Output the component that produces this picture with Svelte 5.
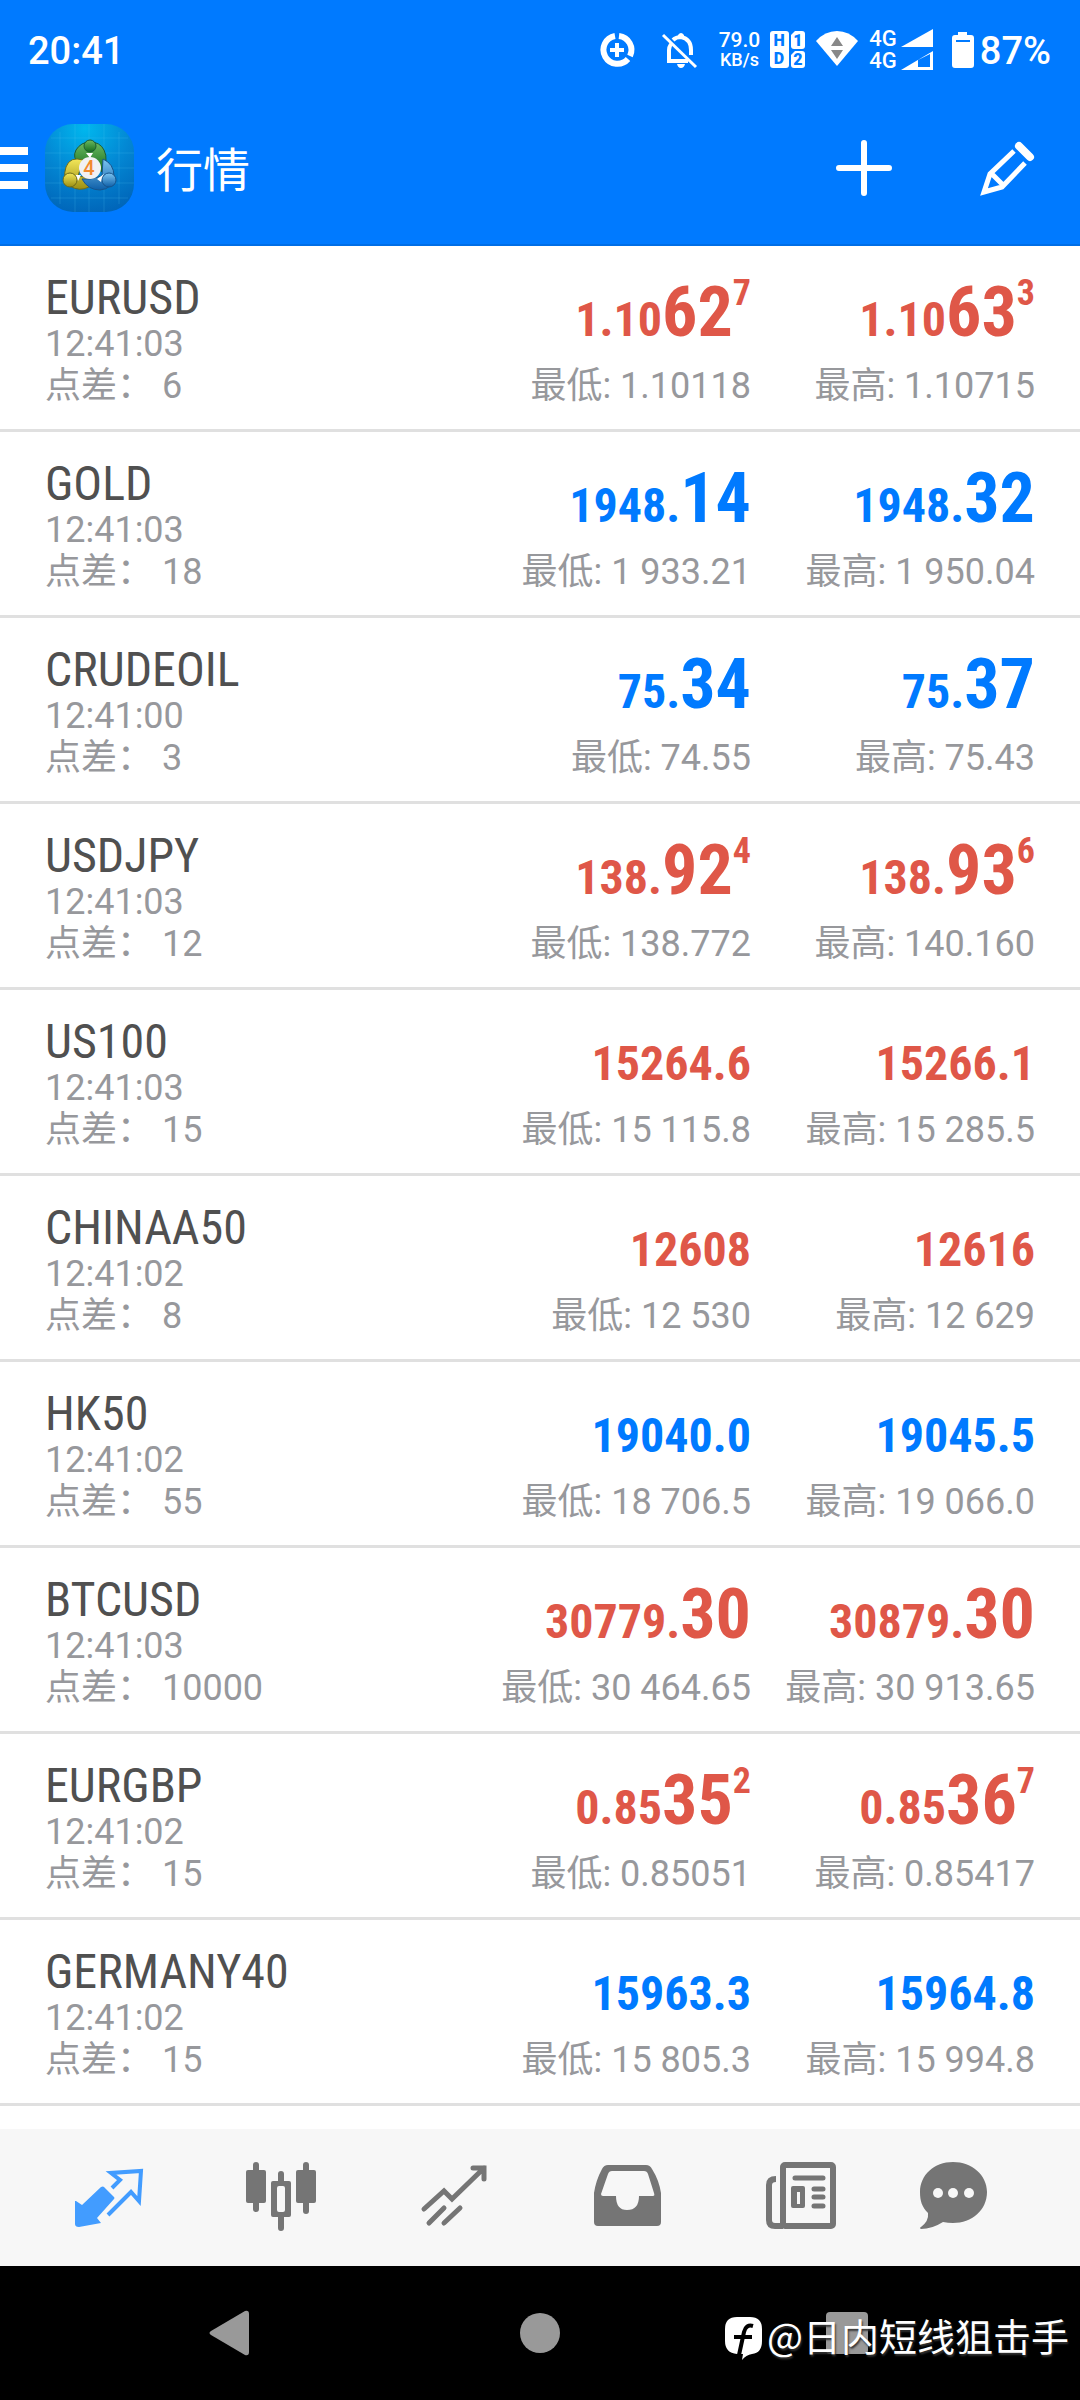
<script lang="ts">
  interface Price {
    small: string;
    big?: string;
    sup?: string;
  }

  interface Quote {
    symbol: string;
    time: string;
    spread: string;
    trend: 'up' | 'down';
    bid: Price;
    ask: Price;
    low: string;
    high: string;
  }

  const quotes: Quote[] = [
    { symbol: 'EURUSD', time: '12:41:03', spread: '6', trend: 'down', bid: { small: '1.10', big: '62', sup: '7' }, ask: { small: '1.10', big: '63', sup: '3' }, low: '1.10118', high: '1.10715' },
    { symbol: 'GOLD', time: '12:41:03', spread: '18', trend: 'up', bid: { small: '1948.', big: '14' }, ask: { small: '1948.', big: '32' }, low: '1 933.21', high: '1 950.04' },
    { symbol: 'CRUDEOIL', time: '12:41:00', spread: '3', trend: 'up', bid: { small: '75.', big: '34' }, ask: { small: '75.', big: '37' }, low: '74.55', high: '75.43' },
    { symbol: 'USDJPY', time: '12:41:03', spread: '12', trend: 'down', bid: { small: '138.', big: '92', sup: '4' }, ask: { small: '138.', big: '93', sup: '6' }, low: '138.772', high: '140.160' },
    { symbol: 'US100', time: '12:41:03', spread: '15', trend: 'down', bid: { small: '15264.6' }, ask: { small: '15266.1' }, low: '15 115.8', high: '15 285.5' },
    { symbol: 'CHINAA50', time: '12:41:02', spread: '8', trend: 'down', bid: { small: '12608' }, ask: { small: '12616' }, low: '12 530', high: '12 629' },
    { symbol: 'HK50', time: '12:41:02', spread: '55', trend: 'up', bid: { small: '19040.0' }, ask: { small: '19045.5' }, low: '18 706.5', high: '19 066.0' },
    { symbol: 'BTCUSD', time: '12:41:03', spread: '10000', trend: 'down', bid: { small: '30779.', big: '30' }, ask: { small: '30879.', big: '30' }, low: '30 464.65', high: '30 913.65' },
    { symbol: 'EURGBP', time: '12:41:02', spread: '15', trend: 'down', bid: { small: '0.85', big: '35', sup: '2' }, ask: { small: '0.85', big: '36', sup: '7' }, low: '0.85051', high: '0.85417' },
    { symbol: 'GERMANY40', time: '12:41:02', spread: '15', trend: 'up', bid: { small: '15963.3' }, ask: { small: '15964.8' }, low: '15 805.3', high: '15 994.8' },
  ];

  const tabs = ['quotes', 'chart', 'trade', 'history', 'news', 'messages'];
  let activeTab = $state('quotes');
</script>

{#snippet price(value: Price, label: string, limit: string)}
  <div class="price">
    <div class="value">
      <span class="small">{value.small}</span>{#if value.big}<span class="big">{value.big}</span>{/if}{#if value.sup}<span class="sup">{value.sup}</span>{/if}
    </div>
    <div class="limit">{label}: {limit}</div>
  </div>
{/snippet}

<div class="page">
  <header>
    <div class="status">
      <span class="clock">20:41</span>
      <div class="status-icons">
        <!-- Data saver -->
        <svg width="43" height="40" viewBox="0 0 43 40" fill="none" stroke="#fff">
          <path d="M19 6 A14 14 0 0 1 30 26" stroke-width="6" />
          <path d="M28 29 A14 14 0 1 1 15 6" stroke-width="6" />
          <path d="M17 13 V27 M10 20 H24" stroke-width="4" />
        </svg>
        <!-- Muted bell -->
        <svg width="56" height="40" viewBox="0 0 56 40" fill="none" stroke="#fff">
          <path d="M10 5 L43 37" stroke-width="3" />
          <path d="M18 14 Q16 17 16 20 V31 M14 31 H35 M20 10 Q23 7 28 7 Q38 9 38 20 V25" stroke-width="4" />
          <path d="M25 8 V5 Q28 1 31 5 V8z M24 34 H32 Q31 38 28 38 Q25 38 24 34z" fill="#fff" stroke="none" />
        </svg>
        <div class="speed"><span>79.0</span><span class="unit">KB/s</span></div>
        <!-- HD voice on both sims -->
        <svg class="hd" width="36" height="40" viewBox="0 0 36 40">
          <rect x="0" y="1" width="19" height="37" rx="3" />
          <path d="M25 1 H32 Q35 1 35 4 V16 Q35 19 32 19 H24 Q21 19 21 16 V5z" />
          <path d="M25 21 H32 Q35 21 35 24 V35 Q35 38 32 38 H24 Q21 38 21 35 V25z" />
          <text x="9" y="16">H</text>
          <text x="9" y="34">D</text>
          <text x="28" y="16">1</text>
          <text x="28" y="35">2</text>
        </svg>
        <!-- Wifi -->
        <svg width="43" height="40" viewBox="0 0 43 40">
          <path d="M0 11 Q9 1 21 1 Q33 1 42 11 L21 36z" fill="#fff" />
          <path d="M15 16 L21 7 L27 16z M15 20 H27 L21 29z" fill="#888" />
        </svg>
        <div class="mobile">
          <div class="sims"><span>4G</span><span>4G</span></div>
          <svg width="32" height="44" viewBox="0 0 32 44" fill="#fff">
            <path d="M0 19 L32 1 V19z" />
            <path d="M0 42 L32 23 V42z M17 32 V39 H29 V26z" fill-rule="evenodd" />
          </svg>
        </div>
        <div class="battery">
          <svg width="31" height="40" viewBox="0 0 31 40">
            <path d="M15 2 H24 V5 H28 Q31 5 31 8 V35 Q31 38 28 38 H12 Q9 38 9 35 V8 Q9 5 12 5 H15z" fill="#fff" />
            <rect x="13" y="10" width="14" height="2" fill="#007aff" />
          </svg>
          <span>87%</span>
        </div>
      </div>
    </div>

    <div class="toolbar">
      <button class="menu" aria-label="菜单"><i></i><i></i><i></i></button>
      <svg class="logo" width="89" height="88" viewBox="0 0 89 88">
        <defs>
          <radialGradient id="tile" cx="45%" cy="5%" r="100%">
            <stop offset="0" stop-color="#00b7ee" />
            <stop offset="0.5" stop-color="#0388d4" />
            <stop offset="1" stop-color="#0064b8" />
          </radialGradient>
          <linearGradient id="green" x2="0" y2="1">
            <stop offset="0" stop-color="#6dbb62" />
            <stop offset="1" stop-color="#146c1c" />
          </linearGradient>
          <linearGradient id="yellow" x2="0" y2="1">
            <stop offset="0" stop-color="#f3e75a" />
            <stop offset="1" stop-color="#9c8f12" />
          </linearGradient>
          <linearGradient id="blue" x2="0" y2="1">
            <stop offset="0" stop-color="#7cc6f2" />
            <stop offset="1" stop-color="#0e5fa8" />
          </linearGradient>
        </defs>
        <rect width="89" height="88" rx="28" fill="url(#tile)" />
        <path d="M15 8 V80 M30 0 V88 M44 0 V88 M59 0 V88 M74 8 V80 M6 14 H83 M0 29 H89 M0 44 H89 M0 59 H89 M6 74 H83" stroke="#5cc6f0" stroke-opacity="0.2" />
        <path d="M44 35 L34 41 Q27 33 31 26 Q36 18 45 18 Q55 18 59 26 Q64 36 57 48 L52 44z" fill="url(#green)" stroke="#1d5c33" />
        <path d="M38 36 Q25 32 21 43 Q17 55 25 62 Q34 68 44 63 L45 54 L33 52z" fill="url(#yellow)" stroke="#6d6a1a" />
        <path d="M58 35 Q69 40 69 52 Q68 65 55 66 Q43 66 37 55 L45 55 L57 52z" fill="url(#blue)" stroke="#17548c" />
        <path d="M30 51 L36 51 L33 57z M52 55 L59 50 L56 58z M41 29 H48 L45 34z" fill="#fff" />
        <circle cx="45" cy="22" r="6" fill="url(#green)" stroke="#1d5c33" />
        <circle cx="25" cy="56" r="7" fill="url(#yellow)" stroke="#6d6a1a" />
        <circle cx="64" cy="56" r="7" fill="url(#blue)" stroke="#17548c" />
        <circle cx="45" cy="44" r="11" fill="#f1f1f4" />
        <text x="44" y="51" text-anchor="middle">4</text>
      </svg>
      <h1>行情</h1>
      <button class="tool" aria-label="添加">
        <svg width="60" height="60" viewBox="0 0 60 60" stroke="#fff" stroke-width="6" stroke-linecap="round">
          <path d="M30 5 V55 M5 30 H55" />
        </svg>
      </button>
      <button class="tool" aria-label="编辑">
        <svg width="60" height="60" viewBox="0 0 60 60" fill="none" stroke="#fff" stroke-width="5">
          <path d="M36 13 L12 36 L6 54 L24 49 L47 25 M13 35 L26 48" />
          <path d="M41 8 L52 19" stroke-width="8" stroke-linecap="round" />
        </svg>
      </button>
    </div>
  </header>

  <ul class="quotes">
    {#each quotes as quote (quote.symbol)}
      <li class={quote.trend}>
        <div class="info">
          <div class="symbol">{quote.symbol}</div>
          <div class="time">{quote.time}</div>
          <div class="spread">点差： {quote.spread}</div>
        </div>
        {@render price(quote.bid, '最低', quote.low)}
        {@render price(quote.ask, '最高', quote.high)}
      </li>
    {/each}
  </ul>

  <nav class="tabs">
    {#each tabs as tab}
      <button class:active={activeTab === tab} aria-label={tab} onclick={() => (activeTab = tab)}>
        <svg width="120" height="85" viewBox="0 0 120 85" fill="currentColor">
          {#if tab === 'quotes'}
            <path d="M28 46 L34 50 L53 32 Q55 31 56 32 L66 42 Q67 43 66 44 L49 63 L53 68 L31 72 Q27 72 27 69 V46z" />
            <path d="M64 33 L72 25 L63 18 L93 16 L91 46 L83 37 L60 60" fill="none" stroke="currentColor" stroke-width="4" />
          {:else if tab === 'chart'}
            <rect x="25" y="15" width="20" height="33" rx="2" />
            <rect x="32" y="7" width="6" height="50" rx="3" />
            <path d="M52 26 H57 V19 Q57 16 60 16 Q63 16 63 19 V26 H68 Q70 26 70 28 V60 Q70 62 68 62 H63 V73 Q63 76 60 76 Q57 76 57 73 V62 H52 Q50 62 50 60 V28 Q50 26 52 26z M58 31 Q56 31 56 33 V55 Q56 57 58 57 H62 Q64 57 64 55 V33 Q64 31 62 31z" fill-rule="evenodd" />
            <rect x="75" y="15" width="20" height="33" rx="2" />
            <rect x="82" y="7" width="6" height="52" rx="3" />
          {:else if tab === 'trade'}
            <g fill="none" stroke="currentColor" stroke-width="5" stroke-linecap="round">
              <path d="M30 54 L50 36 L58 44 L90 13 M79 13 H90 V24" />
              <path d="M35 68 L50 53 M50 68 L66 53" />
            </g>
          {:else if tab === 'history'}
            <path d="M27 38 Q29 25 35 14 Q37 10 41 10 H79 Q83 10 85 14 Q92 25 94 38 V67 Q94 71 90 71 H31 Q27 71 27 67z M34 39 Q34 41 36 41 H49 Q49 55 60 55 Q72 55 72 41 H86 Q88 41 87 38 L81 19 Q80 16 77 16 H45 Q42 16 41 19z" fill-rule="evenodd" />
          {:else if tab === 'news'}
            <g fill="none" stroke="currentColor" stroke-width="6">
              <rect x="43" y="10" width="50" height="61" rx="2" />
              <path d="M36 24 Q29 24 29 30 V65 Q29 71 35 71 H43" />
              <path d="M55 23 H83 M74 34 H83 M74 42 H83 M74 51 H83" stroke-width="5" stroke-linecap="round" />
            </g>
            <path d="M53 31 H63 Q65 31 65 33 V51 Q65 53 63 53 H53 Q51 53 51 51 V33 Q51 31 53 31z M57 37 V49 H60 V37z" fill-rule="evenodd" />
          {:else}
            <path d="M40 7 C59 7 74 20 74 37 C74 55 59 68 40 68 Q35 68 30 67 Q19 74 8 74 Q6 73 8 72 Q16 66 15 58 C9 52 7 46 7 37 C7 20 21 7 40 7z" />
            <g fill="#f7f7f7">
              <circle cx="25" cy="38" r="5" />
              <circle cx="40" cy="38" r="5" />
              <circle cx="56" cy="38" r="5" />
            </g>
          {/if}
        </svg>
      </button>
    {/each}
  </nav>

  <footer>
    <button aria-label="返回">
      <svg width="50" height="50" viewBox="0 0 50 50" fill="#999">
        <path d="M40 3 Q44 2 44 6 V44 Q44 48 40 47 L6 27 Q3 25 6 23z" />
      </svg>
    </button>
    <button aria-label="主屏幕">
      <svg width="50" height="50" viewBox="0 0 50 50" fill="#999"><circle cx="25" cy="25" r="20" /></svg>
    </button>
    <button aria-label="最近任务">
      <svg width="50" height="50" viewBox="0 0 50 50" fill="#999"><rect x="1" y="4" width="42" height="42" rx="4" /></svg>
    </button>
    <div class="watermark">
      <svg width="37" height="44" viewBox="0 0 37 44">
        <path d="M12 0 H25 Q37 0 37 12 V24 Q37 36 27 37 Q21 38 17 43 L18 37 H12 Q0 36 0 24 V12 Q0 0 12 0z" fill="#fff" />
        <path d="M28 9 Q21 7 19 15 L14 38 M9 20 H27" fill="none" stroke="#000" stroke-width="4" />
      </svg>
      <span>@日内短线狙击手</span>
    </div>
  </footer>
</div>

<style>
  :global(body) {
    margin: 0;
    background: #fff;
  }

  .page {
    display: flex;
    flex-direction: column;
    min-height: 100vh;
    font-family: Roboto, "Noto Sans CJK SC", sans-serif;
    color: #505050;
  }

  button {
    display: flex;
    align-items: center;
    justify-content: center;
    padding: 0;
    border: 0;
    background: none;
    color: inherit;
    cursor: pointer;
  }

  svg {
    display: block;
    flex: none;
  }

  header {
    background: #007aff;
    border-bottom: 2px solid #006ee6;
    color: #fff;
  }

  .status {
    display: flex;
    align-items: center;
    justify-content: space-between;
    height: 100px;
    padding: 0 29px 0 28px;
    font-size: 38px;
    font-weight: 500;
  }

  .clock,
  .battery span {
    padding-top: 2px;
  }

  .status-icons,
  .mobile,
  .battery {
    display: flex;
    align-items: center;
    gap: 10px;
  }

  .speed,
  .sims {
    display: flex;
    flex-direction: column;
    align-items: center;
    font-size: 21px;
    line-height: 20px;
  }

  .speed .unit {
    font-size: 18px;
  }

  .sims {
    font-size: 22px;
    line-height: 22px;
  }

  .hd {
    fill: #fff;
  }

  .hd text {
    fill: #007aff;
    font-size: 16px;
    font-weight: 900;
    text-anchor: middle;
  }

  .mobile {
    gap: 4px;
  }

  .battery {
    gap: 6px;
  }

  .toolbar {
    display: flex;
    align-items: center;
    height: 136px;
    padding: 0 42px 8px 0;
  }

  .menu {
    flex-direction: column;
    gap: 9px;
    width: 28px;
    margin-right: 17px;
  }

  .menu i {
    width: 100%;
    height: 8px;
    background: #fff;
  }

  .logo text {
    fill: #f28a2e;
    font-size: 20px;
    font-weight: 500;
  }

  h1 {
    flex: 1;
    margin: 0 0 0 22px;
    padding-top: 6px;
    font-size: 47px;
    font-weight: 400;
    line-height: 60px;
  }

  .tool {
    margin-left: 84px;
  }

  .quotes {
    flex: 1;
    margin: 0;
    padding: 0;
    list-style: none;
  }

  li {
    display: grid;
    grid-template-columns: 1fr 284px 284px;
    padding: 24px 45px 19px;
    border-bottom: 3px solid #e0e0e0;
  }

  .symbol {
    font-family: "Roboto Condensed", "Liberation Sans Narrow", Roboto, sans-serif;
    font-size: 48px;
    line-height: 56px;
  }

  .time {
    color: #97989c;
    font-size: 36px;
    line-height: 36px;
  }

  .spread,
  .limit {
    color: #97989c;
    font-size: 36px;
    line-height: 48px;
    white-space: nowrap;
  }

  .price {
    text-align: right;
  }

  .value {
    margin-bottom: 8px;
    font-family: "Roboto Condensed", "Liberation Sans Narrow", Roboto, sans-serif;
    font-size: 70px;
    font-weight: 700;
    line-height: 84px;
    white-space: nowrap;
  }

  .value span {
    line-height: 1;
  }

  .value .small {
    font-size: 48px;
  }

  .value .sup {
    font-size: 36px;
    vertical-align: 31px;
  }

  .up .value {
    color: #007aff;
  }

  .down .value {
    color: #df5748;
  }

  .tabs {
    display: flex;
    height: 137px;
    padding: 0 21px;
    background: #f7f7f7;
    color: #757575;
  }

  .tabs button {
    flex: 1;
  }

  .tabs .active {
    color: #429cff;
  }

  footer {
    position: relative;
    display: flex;
    height: 134px;
    padding: 0 75px;
    background: #000;
  }

  footer button {
    flex: 1;
  }

  /* Lies over the system buttons */
  .watermark {
    position: absolute;
    right: 11px;
    bottom: 37px;
    display: flex;
    align-items: center;
    gap: 5px;
    color: #fff;
    font-family: "Noto Sans CJK SC", sans-serif;
    font-size: 38px;
    line-height: 56px;
    text-shadow: 1px 2px 2px #333;
  }

  .watermark svg {
    margin-top: 7px;
  }
</style>
